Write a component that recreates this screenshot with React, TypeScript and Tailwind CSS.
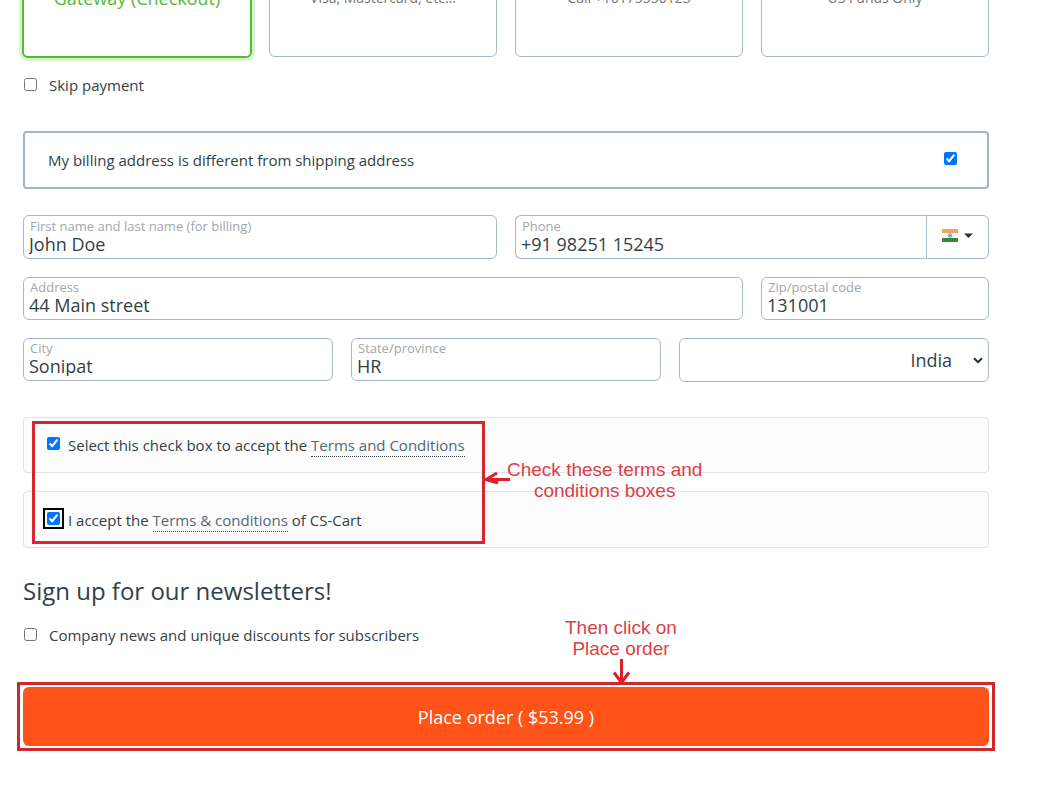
import { useState } from 'react';
import type { ReactNode } from 'react';

const paymentMethods = [
  { id: 'gateway', label: 'Gateway (Checkout)' },
  { id: 'card', label: 'Visa, Mastercard, etc...' },
  { id: 'phone', label: 'Call +16175550123' },
  { id: 'check', label: 'US Funds Only' },
];

function Field({ id, label, value, className = '' }: { id: string; label: string; value: string; className?: string }) {
  return (
    <div className={`flex min-w-0 flex-col rounded-md border border-[#a9b7c6] bg-white ${className}`}>
      <label htmlFor={id} className="px-1.5 text-[13px] leading-[15px] text-[#a3a6aa]">
        {label}
      </label>
      <input
        id={id}
        type="text"
        defaultValue={value}
        className="h-5 w-full bg-transparent px-[5px] text-lg leading-5 text-[#333f48] outline-none"
      />
    </div>
  );
}

function TermsRow({ id, focused = false, children }: { id: string; focused?: boolean; children: ReactNode }) {
  return (
    <div
      className={`flex items-center gap-2 rounded-sm border border-[#dfe3e8] bg-[#fcfcfc] px-[23px] ${
        focused ? 'h-[57px]' : 'h-14'
      }`}
    >
      <input
        id={id}
        type="checkbox"
        defaultChecked
        className={`size-[13px] accent-[#0075ff] ${
          focused ? 'mb-0.5 rounded-[2px] outline-2 outline-offset-2 outline-black' : 'mb-1'
        }`}
      />
      <label htmlFor={id} className="text-[15px] leading-5">
        {children}
      </label>
    </div>
  );
}

function TermsLink({ children }: { children: ReactNode }) {
  return (
    <a href="#terms" className="border-b border-dotted border-[#333f48] pb-px text-[#566673]">
      {children}
    </a>
  );
}

function IndiaFlag() {
  return (
    <svg width="16" height="13" viewBox="0 0 16 13" aria-hidden="true">
      <rect width="16" height="13" fill="#f8f8f8" />
      <rect width="16" height="4" fill="#f0a860" />
      <rect y="9" width="16" height="4" fill="#2f8b35" />
      <circle cx="8" cy="6.5" r="1.8" fill="#c3c7e4" stroke="#7d84bd" strokeWidth="0.8" />
      <circle cx="8" cy="6.5" r="0.6" fill="#4d559c" />
    </svg>
  );
}

export default function App() {
  const [method, setMethod] = useState('gateway');

  return (
    <main className="bg-white pr-14 pb-12 pl-[23px] font-['Open_Sans',sans-serif] text-[#333f48]">
      <div className="-mt-4 grid h-[73px] grid-cols-4 gap-[18px]">
        {paymentMethods.map((item) => (
          <button
            key={item.id}
            type="button"
            onClick={() => setMethod(item.id)}
            className={`flex justify-center rounded-md bg-white ${
              method === item.id
                ? '-mx-px h-[74px] border-2 border-[#55b938] text-lg leading-6 text-[#55b938] ring-3 ring-[#d8f3d0]'
                : 'h-[73px] border border-[#a9b7c6] pt-[3px] text-sm leading-5 text-[#737578]'
            }`}
          >
            {item.label}
          </button>
        ))}
      </div>

      <div className="mt-[18px] flex items-center gap-3 pl-px">
        <input id="skip" type="checkbox" className="mb-0.5 size-[13px]" />
        <label htmlFor="skip" className="text-[15px] leading-5">Skip payment</label>
      </div>

      <div className="mt-9 flex h-[58px] items-center justify-between rounded-sm border-2 border-[#a5b3c2] pr-[30px] pl-[23px]">
        <label htmlFor="billing" className="text-[15px] leading-5">
          My billing address is different from shipping address
        </label>
        <input id="billing" type="checkbox" defaultChecked className="mb-1 size-[13px] accent-[#0075ff]" />
      </div>

      <div className="mt-[26px] grid grid-cols-12 gap-[18px]">
        <Field
          id="name"
          label="First name and last name (for billing)"
          value="John Doe"
          className="col-span-6 h-11 pt-[3px]"
        />
        <div className="col-span-6 flex h-11">
          <Field id="phone" label="Phone" value="+91 98251 15245" className="flex-1 rounded-r-none border-r-0 pt-[3px]" />
          <button
            type="button"
            aria-label="Country code"
            className="flex w-[63px] items-center justify-center gap-1.5 rounded-r-md border border-[#a9b7c6] pb-[3px]"
          >
            <IndiaFlag />
            <svg width="9" height="5" viewBox="0 0 9 5" aria-hidden="true">
              <path d="M0 0.5h9L4.5 5z" fill="#28333c" />
            </svg>
          </button>
        </div>
        <Field id="address" label="Address" value="44 Main street" className="col-span-9 h-[43px] pt-0.5" />
        <Field id="zip" label="Zip/postal code" value="131001" className="col-span-3 h-[43px] pt-0.5" />
        <Field id="city" label="City" value="Sonipat" className="col-span-4 h-[43px] pt-0.5" />
        <Field id="state" label="State/province" value="HR" className="col-span-4 h-[43px] pt-0.5" />
        <div className="relative col-span-4">
          <select
            aria-label="Country"
            defaultValue="IN"
            className="h-11 w-full appearance-none rounded-md border border-[#a9b7c6] bg-white pr-9 pl-3 text-right text-lg text-[#333f48] [text-align-last:right]"
          >
            <option value="IN">India</option>
            <option value="US">United States</option>
          </select>
          <svg
            width="10"
            height="7"
            viewBox="0 0 10 7"
            aria-hidden="true"
            className="pointer-events-none absolute top-[19px] right-1.5"
          >
            <path d="M1 1.2l4 4 4-4" fill="none" stroke="#222c35" strokeWidth="2" />
          </svg>
        </div>
      </div>

      <section className="relative mt-[35px] flex flex-col gap-[18px]">
        <TermsRow id="terms-store">
          Select this check box to accept the <TermsLink>Terms and Conditions</TermsLink>
        </TermsRow>
        <TermsRow id="terms-cart" focused>
          I accept the <TermsLink>Terms &amp; conditions</TermsLink> of CS-Cart
        </TermsRow>

        {/* Callout */}
        <div className="pointer-events-none absolute top-1 left-[9px] h-[123px] w-[453px] border-3 border-[#d9252f]" />
        <div className="pointer-events-none absolute top-[42px] left-[460px] flex items-start">
          <svg width="28" height="18" viewBox="0 0 28 18" aria-hidden="true" className="mt-3 shrink-0">
            <path d="M27 8.5H3M14 2L3 8.5l12 3.500" fill="none" stroke="#e11f2a" strokeWidth="3" />
          </svg>
          <p className="-ml-1 text-center font-['Liberation_Sans',sans-serif] text-[19px] leading-[21px] whitespace-nowrap text-[#dd3f46]">
            Check these terms and
            <br />
            conditions boxes
          </p>
        </div>
      </section>

      <h2 className="mt-[27px] text-2xl leading-8">Sign up for our newsletters!</h2>
      <div className="mt-[18px] flex items-center gap-3 pl-px">
        <input id="news" type="checkbox" className="mb-0.5 size-[13px]" />
        <label htmlFor="news" className="text-[15px] leading-5">
          Company news and unique discounts for subscribers
        </label>
      </div>

      <div className="relative mt-[42px]">
        <button type="button" className="h-[59px] w-full rounded-md bg-[#ff5319] text-lg text-white">
          Place order ( $53.99 )
        </button>

        {/* Callout */}
        <div className="pointer-events-none absolute -inset-x-1.5 -inset-y-[5px] border-3 border-[#d0262d]" />
        <div className="pointer-events-none absolute bottom-full left-[542px] flex flex-col items-center">
          <p className="text-center font-['Liberation_Sans',sans-serif] text-[19px] leading-[21px] whitespace-nowrap text-[#dd3f46]">
            Then click on
            <br />
            Place order
          </p>
          <svg width="18" height="26" viewBox="0 0 18 26" aria-hidden="true" className="mb-0.5">
            <path d="M9.500 0v24M2 13.500l7.500 10L17 13.500" fill="none" stroke="#d9202a" strokeWidth="3" />
          </svg>
        </div>
      </div>
    </main>
  );
}
